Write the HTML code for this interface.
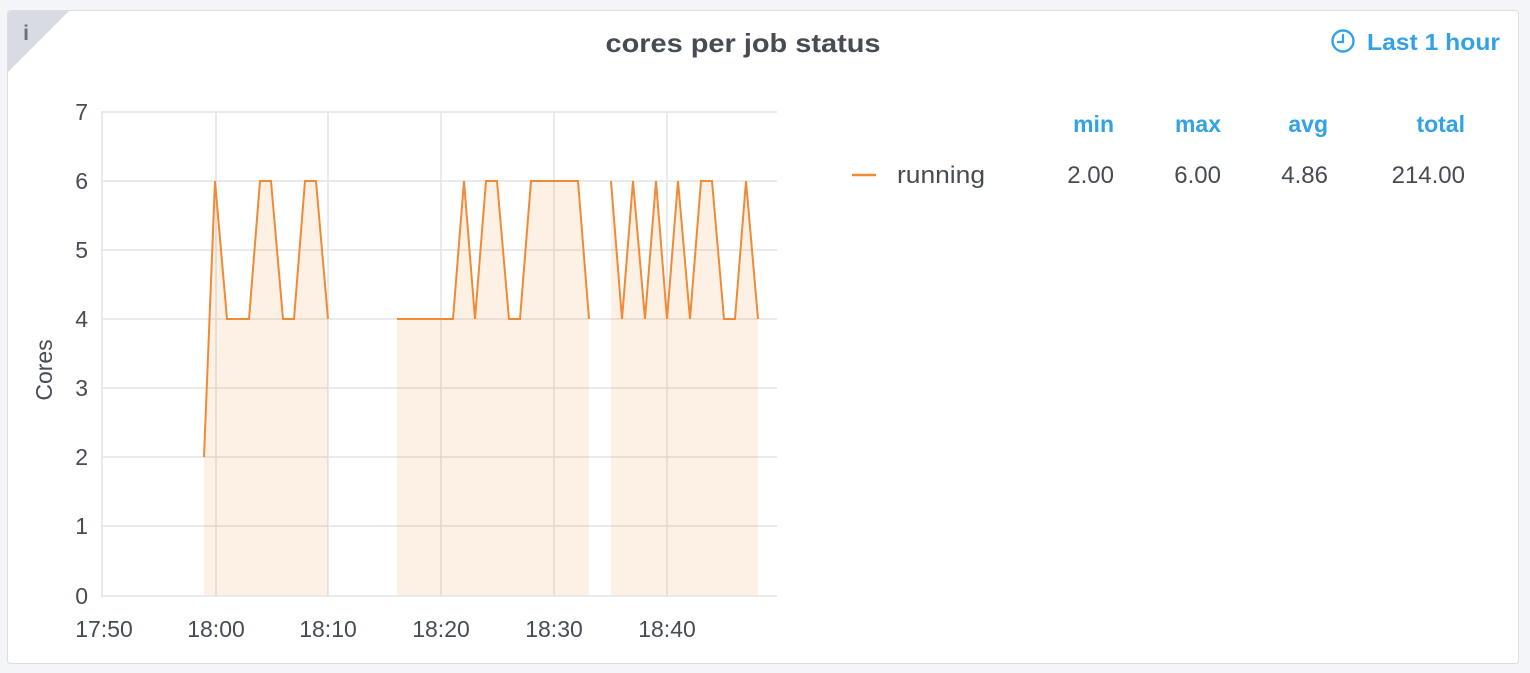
<!DOCTYPE html>
<html><head><meta charset="utf-8"><style>
html,body{margin:0;padding:0;background:#f4f5f8;width:1530px;height:673px;overflow:hidden}
svg{display:block}
text{font-family:"Liberation Sans",sans-serif}
</style></head><body>
<svg width="1530" height="673" viewBox="0 0 1530 673">
<rect x="0" y="0" width="1530" height="673" fill="#f4f5f8"/>
<rect x="7.5" y="10.5" width="1511" height="653" rx="3" fill="#fff" stroke="#dcdee3"/>
<path d="M8 14 Q8 11 11 11 L69 11 L8 72 Z" fill="#d8dbe1"/>
<text x="26" y="40" font-size="21" font-weight="bold" fill="#6b7079" font-family="Liberation Serif" text-anchor="middle">i</text>
<text x="743" y="52" font-size="26" font-weight="bold" fill="#464c54" text-anchor="middle" textLength="275" lengthAdjust="spacingAndGlyphs">cores per job status</text>
<circle cx="1343" cy="41" r="10.5" fill="none" stroke="#33a2e5" stroke-width="2.4"/>
<path d="M1343 34 V42 H1337" fill="none" stroke="#33a2e5" stroke-width="2.2"/>
<text x="1367" y="50" font-size="23" font-weight="bold" fill="#33a2e5" textLength="133" lengthAdjust="spacingAndGlyphs">Last 1 hour</text>
<g stroke="#e3e4e6" stroke-width="1.5">
<line x1="101" y1="112" x2="777" y2="112"/><line x1="101" y1="181" x2="777" y2="181"/>
<line x1="101" y1="250" x2="777" y2="250"/><line x1="101" y1="319" x2="777" y2="319"/>
<line x1="101" y1="388" x2="777" y2="388"/><line x1="101" y1="457" x2="777" y2="457"/>
<line x1="101" y1="526" x2="777" y2="526"/><line x1="101" y1="596" x2="777" y2="596"/>
<line x1="102" y1="112" x2="102" y2="596"/><line x1="216" y1="112" x2="216" y2="596"/>
<line x1="328" y1="112" x2="328" y2="596"/><line x1="441" y1="112" x2="441" y2="596"/>
<line x1="554" y1="112" x2="554" y2="596"/><line x1="667" y1="112" x2="667" y2="596"/>
</g>
<g fill="#f08a35" fill-opacity="0.13">
<polygon points="204,595 204,457 215,181 227,319 238,319 249,319 260,181 271,181 283,319 294,319 305,181 316,181 328,319 328,595"/>
<polygon points="397,595 397,319 453,319 464,181 475,319 486,181 497,181 509,319 520,319 531,181 578,181 589,319 589,595"/>
<polygon points="611,595 611,181 622,319 633,181 645,319 656,181 667,319 678,181 690,319 701,181 712,181 724,319 735,319 746,181 758,319 758,595"/>
</g>
<g fill="none" stroke="#f08a35" stroke-width="2" stroke-linejoin="miter">
<polyline points="204,457 215,181 227,319 238,319 249,319 260,181 271,181 283,319 294,319 305,181 316,181 328,319"/>
<polyline points="397,319 453,319 464,181 475,319 486,181 497,181 509,319 520,319 531,181 578,181 589,319"/>
<polyline points="611,181 622,319 633,181 645,319 656,181 667,319 678,181 690,319 701,181 712,181 724,319 735,319 746,181 758,319"/>
</g>
<g font-size="23" fill="#464c54" text-anchor="end">
<text x="88" y="120">7</text><text x="88" y="189">6</text><text x="88" y="258">5</text>
<text x="88" y="327">4</text><text x="88" y="396">3</text><text x="88" y="465">2</text>
<text x="88" y="534">1</text><text x="88" y="604">0</text>
</g>
<g font-size="23" fill="#464c54" text-anchor="middle">
<text x="104" y="637">17:50</text><text x="216" y="637">18:00</text><text x="328" y="637">18:10</text>
<text x="441" y="637">18:20</text><text x="554" y="637">18:30</text><text x="667" y="637">18:40</text>
</g>
<text transform="translate(52,370) rotate(-90)" font-size="23" fill="#464c54" text-anchor="middle">Cores</text>
<g font-size="23" font-weight="bold" fill="#33a2e5" text-anchor="end">
<text x="1114" y="132">min</text><text x="1221" y="132">max</text><text x="1328" y="132">avg</text><text x="1465" y="132">total</text>
</g>
<line x1="852" y1="175" x2="876" y2="175" stroke="#f08a35" stroke-width="2.5"/>
<text x="897" y="183" font-size="24" fill="#464c54" textLength="88" lengthAdjust="spacingAndGlyphs">running</text>
<g font-size="24" fill="#464c54" text-anchor="end">
<text x="1114" y="183">2.00</text><text x="1221" y="183">6.00</text><text x="1328" y="183">4.86</text><text x="1465" y="183">214.00</text>
</g>
</svg>
</body></html>
